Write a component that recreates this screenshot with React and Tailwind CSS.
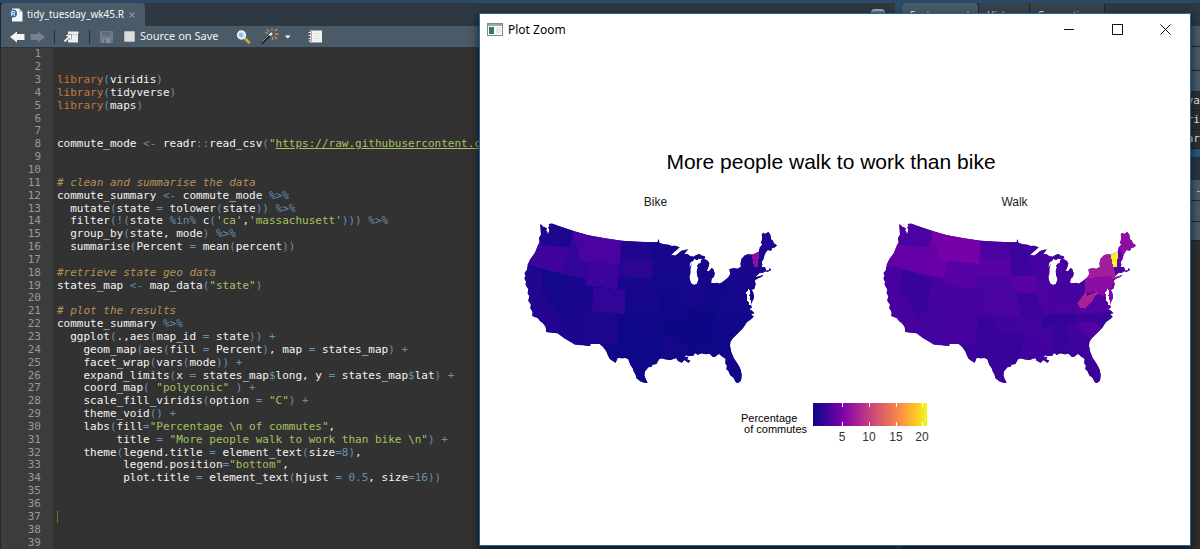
import React from "react";

const CODE = [
  "",
  "",
  "library(viridis)",
  "library(tidyverse)",
  "library(maps)",
  "",
  "",
  'commute_mode <- readr::read_csv("https://raw.githubusercontent.c',
  "",
  "",
  "# clean and summarise the data",
  "commute_summary <- commute_mode %>%",
  "  mutate(state = tolower(state)) %>%",
  "  filter(!(state %in% c('ca','massachusett'))) %>%",
  "  group_by(state, mode) %>%",
  "  summarise(Percent = mean(percent))",
  "",
  "#retrieve state geo data",
  'states_map <- map_data("state")',
  "",
  "# plot the results",
  "commute_summary %>%",
  "  ggplot(.,aes(map_id = state)) +",
  "    geom_map(aes(fill = Percent), map = states_map) +",
  "    facet_wrap(vars(mode)) +",
  "    expand_limits(x = states_map$long, y = states_map$lat) +",
  '    coord_map( "polyconic" ) +',
  '    scale_fill_viridis(option = "C") +',
  "    theme_void() +",
  '    labs(fill="Percentage \\n of commutes",',
  '         title = "More people walk to work than bike \\n") +',
  "    theme(legend.title = element_text(size=8),",
  '          legend.position="bottom",',
  "          plot.title = element_text(hjust = 0.5, size=16))",
  "",
  "",
  "",
  "",
  "",
];
const CURSOR_LINE = 37;

const TOKEN =
  /(#.*$)|(https?:[^"]*)|("(?=https?:)|"[^"]*"|'[^']*')|(\blibrary\b)|(%[a-z>]+%|<-|::|[()=+$!]|\b\d+(?:\.\d+)?\b)/g;
const STYLES = [
  "italic text-[#b8905a]",
  "text-[#a5c261] underline",
  "text-[#a5c261]",
  "text-[#cc7833]",
  "text-[#6690b0]",
];

function highlight(line) {
  const out = [];
  let last = 0;
  for (const m of line.matchAll(TOKEN)) {
    if (m.index > last) out.push(line.slice(last, m.index));
    const kind = m.slice(1).findIndex((g) => g !== undefined);
    out.push(
      <span key={m.index} className={STYLES[kind]}>
        {m[0]}
      </span>
    );
    last = m.index + m[0].length;
  }
  out.push(line.slice(last));
  return out;
}

const OUTLINE =
  "M76,43 L80,45 84,50 90,52 96,56 93,62 98,66 96,72 101,69 103,60 100,52 104,48 101,42 110,40 140,51 178,64 220,76 270,85 320,92 370,95 412,97 428,97 429,88 432,90 433,98 445,103 460,104 470,108 480,107 494,112 484,121 474,129 466,138 474,135 480,137 488,132 494,127 500,122 510,120 520,117 514,124 508,132 518,133 526,139 536,140 544,135 554,132 560,137 568,138 571,144 560,147 552,145 546,150 538,146 534,153 528,155 524,164 522,172 528,166 531,158 526,178 526,190 523,202 526,214 530,222 538,225 546,221 551,208 546,194 545,182 549,172 546,168 552,160 556,162 559,150 566,146 578,152 583,160 580,172 575,182 582,184 590,174 595,178 599,190 597,200 590,206 588,218 598,220 606,218 614,221 626,214 640,202 646,192 643,178 654,175 668,176 678,170 676,160 680,146 690,136 700,133 712,134 722,130 732,124 734,112 742,104 738,98 742,84 740,74 744,68 750,72 760,66 766,74 768,88 774,92 776,100 786,106 780,112 772,114 768,122 758,120 752,128 748,136 746,146 740,156 742,164 739,170 750,172 754,182 762,181 764,174 768,180 758,185 750,184 744,188 734,188 728,194 720,202 736,198 746,194 740,200 724,208 719,212 722,222 718,236 710,240 716,250 717,264 712,274 708,284 710,294 702,296 712,304 718,310 708,312 716,320 708,328 696,336 684,354 676,362 664,374 652,386 646,396 645,408 648,424 656,444 668,462 676,476 680,494 678,512 668,520 662,516 656,504 646,496 640,482 634,478 636,468 631,460 632,446 622,440 612,431 600,440 594,441 584,431 572,433 560,430 548,434 540,429 534,438 524,437 514,436 508,442 520,440 516,448 526,452 520,458 508,450 500,458 488,452 484,444 466,450 450,448 440,445 432,448 424,462 412,464 410,470 400,472 390,484 388,496 392,508 398,518 388,518 376,514 364,504 362,494 356,484 354,476 346,464 340,448 332,444 320,445 308,443 302,458 292,452 284,446 278,434 274,424 264,410 254,401 226,402 226,408 202,406 180,404 150,386 128,370 94,366 92,350 84,340 76,334 68,324 52,318 53,306 46,294 48,284 40,272 43,258 38,250 40,238 32,224 33,214 28,206 32,196 28,190 36,180 38,164 46,148 60,128 68,108 74,96 72,84 78,74 Z";
const BAY = "M700,238 L696,246 692,244 697,258 695,270 702,278 704,288 709,280 706,268 703,256 706,244 Z";

// id, polygon, bike colour, walk colour
const STATES = [
  ["ca", "20,165 85,184 78,240 138,325 126,374 90,380 20,310", "#230591", "#46019e"],
  ["nv", "85,182 176,206 158,308 148,306 138,325 78,240", "#14078a", "#38039a"],
  ["ut", "176,206 213,212 212,226 236,232 230,304 160,292", "#18078c", "#46039e"],
  ["az", "160,292 230,304 222,412 120,376 138,325 148,306 158,308", "#1b068d", "#43039e"],
  ["nm", "230,304 310,312 306,402 222,412", "#1e068e", "#48039f"],
  ["co", "236,232 332,240 328,312 230,304", "#300597", "#46039f"],
  ["wa", "60,30 178,60 165,112 100,108 70,96", "#1f068f", "#4a02a0"],
  ["or", "74,96 84,104 100,108 155,112 157,128 146,150 140,190 20,160", "#3f049b", "#6400a6"],
  ["id", "178,60 172,84 182,98 194,122 194,138 205,154 222,154 213,208 140,190 146,150 157,128 155,112 165,112", "#33059a", "#6900a7"],
  ["mt", "174,60 320,88 314,164 222,152 218,156 205,154 192,136 194,122 182,98 174,84", "#4a02a0", "#7501a8"],
  ["wy", "222,152 314,162 306,237 212,226", "#3b049b", "#5601a4"],
  ["nd", "320,88 408,92 414,151 316,147", "#20068f", "#4b02a0"],
  ["sd", "316,147 414,151 414,206 400,208 390,204 312,200", "#2c0595", "#5801a4"],
  ["ne", "310,202 400,208 414,210 430,256 332,254 332,240 308,237", "#18078c", "#4803a0"],
  ["ks", "331,253 430,256 438,270 438,320 328,314", "#14078a", "#4a02a0"],
  ["ok", "310,312 438,318 442,370 400,368 362,356 360,324 310,320", "#120789", "#40039d"],
  ["tx", "310,320 360,324 362,356 400,368 446,372 452,402 440,460 410,530 340,530 250,420 250,402 306,402", "#0e0788", "#390399"],
  ["mn", "408,92 500,108 466,140 460,160 490,198 414,200 410,150", "#17078b", "#3e039c"],
  ["ia", "408,198 488,196 495,222 482,250 420,246", "#15078a", "#5a01a4"],
  ["mo", "428,250 482,248 500,288 516,312 508,328 440,324", "#0f0788", "#3e039c"],
  ["ar", "440,324 508,326 496,374 448,374", "#0d0786", "#43039e"],
  ["la", "448,374 492,374 490,402 520,404 530,464 440,464", "#15078a", "#4102a0"],
  ["wi", "460,136 480,134 524,152 530,204 490,206 480,186 460,162", "#17078b", "#4602a0"],
  ["up", "474,132 500,116 572,130 572,150 530,158 500,144", "#15078a", "#4802a0"],
  ["mi", "544,142 604,142 604,222 546,228", "#17078b", "#46039f"],
  ["il", "488,204 532,204 532,260 520,306 512,306 496,280 482,250", "#14078a", "#4a02a0"],
  ["in", "532,222 568,222 572,270 548,292 524,300 532,260", "#17078b", "#4702a0"],
  ["oh", "568,222 600,222 634,206 634,248 610,278 572,270", "#12078a", "#4402a0"],
  ["ky", "516,312 524,298 548,292 572,270 606,278 618,294 602,314", "#100788", "#4a02a0"],
  ["tn", "508,326 516,314 620,308 612,320 580,344 498,352", "#0d0786", "#330597"],
  ["ms", "498,352 538,348 536,440 516,440 520,404 490,402", "#0d0786", "#43039e"],
  ["al", "538,348 576,345 590,402 548,408 548,436 536,440", "#0d0786", "#36049a"],
  ["ga", "576,345 612,340 654,386 646,412 590,410", "#0e0787", "#40039c"],
  ["fl", "548,408 590,408 648,410 700,530 620,530 600,446 546,440", "#130789", "#3c039a"],
  ["sc", "608,342 642,332 664,338 684,354 652,388", "#12078a", "#5601a4"],
  ["nc", "620,308 730,298 720,330 684,354 664,338 642,332 608,342 580,344", "#10078a", "#38049a"],
  ["va", "602,316 618,294 634,296 652,280 664,258 684,250 720,296 720,304", "#14078a", "#5002a2"],
  ["wv", "634,246 640,258 656,250 670,244 672,252 662,260 652,278 634,296 618,294 610,280", "#15078a", "#a82296"],
  ["pa", "632,206 712,196 722,216 710,240 634,250", "#18078c", "#8a0da4"],
  ["md", "656,246 706,238 720,262 712,278 696,262 672,252 670,244", "#17078b", "#8707a0"],
  ["nj", "712,196 730,206 722,240 712,248 708,238 720,216", "#15078a", "#6e00a8"],
  ["ny", "632,206 636,176 676,166 680,130 712,130 720,172 726,196 750,192 740,204 714,208 712,196", "#1c068e", "#a21d99"],
  ["ma", "718,170 740,166 772,170 770,188 728,196 724,190", "#1f068f", "#4b02a0"],
  ["nh", "732,122 738,108 750,140 742,168 728,170", "#1f068f", "#6a00a7"],
  ["me", "742,60 790,60 790,112 750,144 738,116", "#1e068e", "#8f0da3"],
  ["vt", "709,132 733,126 728,170 718,172", "#8f0da3", "#f0f724"],
];

function StateMap({ mode }) {
  const column = mode === "Bike" ? 2 : 3;
  const base = mode === "Bike" ? "#13078a" : "#43039e";
  const clip = "land-" + mode;
  return (
    <figure className="flex flex-col items-center">
      <figcaption className="text-[12px] leading-4 text-[#1a1a1a]">{mode}</figcaption>
      <svg viewBox="18 0 810 540" className="w-[270px] h-[180px]" shapeRendering="crispEdges" role="img" aria-label={mode}>
        <clipPath id={clip}>
          <path d={OUTLINE} />
        </clipPath>
        <g clipPath={`url(#${clip})`}>
          <rect width="830" height="540" fill={base} />
          {STATES.map((s) => (
            <polygon key={s[0]} points={s[1]} fill={s[column]} />
          ))}
        </g>
        <path d={BAY} fill="#fff" />
      </svg>
    </figure>
  );
}

function Legend() {
  return (
    <div className="flex items-start gap-[6px] self-center pl-1">
      <div className="pt-[10px] text-[11px] leading-[11px] text-black whitespace-pre">
        {"Percentage\n of commutes"}
      </div>
      <svg viewBox="0 0 120 44" className="w-[120px] h-11" fontFamily="Liberation Sans, Arial, sans-serif" fontSize="12" fill="#333" textAnchor="middle">
        <defs>
          <linearGradient id="plasma">
            <stop offset="0" stopColor="#0d0887" />
            <stop offset="0.13" stopColor="#42039d" />
            <stop offset="0.26" stopColor="#7e03a8" />
            <stop offset="0.4" stopColor="#ab2494" />
            <stop offset="0.52" stopColor="#cc4778" />
            <stop offset="0.65" stopColor="#e66c5c" />
            <stop offset="0.78" stopColor="#f89540" />
            <stop offset="0.9" stopColor="#fdc527" />
            <stop offset="1" stopColor="#f0f921" />
          </linearGradient>
        </defs>
        <rect width="114" height="23" fill="url(#plasma)" />
        <path d="M29.500,0v4M56.500,0v4M83.500,0v4M109.500,0v4M29.500,19v4M56.500,19v4M83.500,19v4M109.500,19v4" stroke="#fff" />
        <text x="29" y="38">5</text>
        <text x="56" y="38">10</text>
        <text x="83" y="38">15</text>
        <text x="109" y="38">20</text>
      </svg>
    </div>
  );
}

function PlotWindow() {
  return (
    <section className="absolute left-[479px] right-[9px] top-[13px] bottom-[3px] flex flex-col overflow-hidden border border-[#2468a0] bg-white shadow-[0_4px_8px_1px_rgba(8,16,24,0.7)] font-['Liberation_Sans',Arial,sans-serif]">
      <header className="flex h-[31px] shrink-0 items-center pl-[7px] text-black">
        <svg viewBox="0 0 16 14" className="h-[14px] w-4">
          <rect x="0.500" y="0.500" width="15" height="12" fill="#fff" stroke="#888" />
          <rect x="1" y="1" width="14" height="2" fill="#9aa" />
          <rect x="2" y="4" width="5" height="7" fill="#2e7d6b" />
          <rect x="9" y="4" width="5" height="7" fill="#e4e8ec" />
        </svg>
        <h1 className="ml-[5px] flex-1 font-['Noto_Sans','Open_Sans',sans-serif] text-[12px]">Plot Zoom</h1>
        <div className="flex pr-px">
          <button aria-label="Minimize" className="flex w-12 justify-center">
            <svg viewBox="0 0 11 11" className="size-[11px]" stroke="#111" fill="none" shapeRendering="crispEdges"><path d="M0,5.500h10" /></svg>
          </button>
          <button aria-label="Maximize" className="flex w-12 justify-center">
            <svg viewBox="0 0 11 11" className="size-[11px]" stroke="#111" fill="none" shapeRendering="crispEdges"><path d="M0.500,0.500h10v10h-10z" /></svg>
          </button>
          <button aria-label="Close" className="flex w-12 justify-center">
            <svg viewBox="0 0 11 11" className="size-[11px]" stroke="#111" fill="none"><path d="M0.500,0.500l10,10M10.500,0.500l-10,10" /></svg>
          </button>
        </div>
      </header>
      <div className="flex flex-1 flex-col pt-[105px]">
        <h2 className="pr-2 text-center text-[21px] leading-6 text-black">More people walk to work than bike</h2>
        <div className="mt-5 grid grid-cols-2 gap-2">
          <StateMap mode="Bike" />
          <StateMap mode="Walk" />
        </div>
        <div className="mt-[13px] flex justify-center">
          <Legend />
        </div>
      </div>
    </section>
  );
}

function Divider() {
  return <span className="h-[14px] w-px bg-[#22303c]" />;
}

function Toolbar() {
  return (
    <div className="flex h-[22px] shrink-0 items-center border-b border-[#2a3742] bg-[#4a5a67] pl-[9px] text-[#f0f0f0]">
      <button aria-label="Back">
        <svg viewBox="0 0 15 12" className="h-3 w-[15px]"><path d="M0,6L7,0.500V3H14.500V9H7V11.500Z" fill="#f4f4f2" /></svg>
      </button>
      <button aria-label="Forward" className="ml-[5px] mr-[9px]">
        <svg viewBox="0 0 15 12" className="h-3 w-[15px]"><path d="M15,6L8,0.500V3H0.500V9H8V11.500Z" fill="#74818b" /></svg>
      </button>
      <Divider />
      <button aria-label="Show in new window" className="ml-[9px] mr-[10px]">
        <svg viewBox="0 0 15 12" className="h-3 w-[15px]">
          <path d="M4,0.500H14.500V3H14V11.500H4Z" fill="#eceeef" />
          <path d="M4,3H14V4H4Z" fill="#c9d0d5" />
          <path d="M0.500,10.500L6,5M2.500,4.500H6.500V8.500" stroke="#5d6b77" strokeWidth="2.600" fill="none" />
          <path d="M0.500,10.500L6,5M2.500,4.500H6.500V8.500" stroke="#fff" strokeWidth="1.600" fill="none" />
        </svg>
      </button>
      <Divider />
      <button aria-label="Save" className="ml-[10px] mr-[11px]">
        <svg viewBox="0 0 13 12" className="h-3 w-[13px]">
          <path d="M0,0H13V12H0Z" fill="#6d7b87" />
          <path d="M2.500,1H10.500V5H2.500Z" fill="#5c6b77" />
          <path d="M3,7.500H10V12H3Z" fill="#84919c" />
          <path d="M4,8.500H6V12H4Z" fill="#5c6b77" />
        </svg>
      </button>
      <label className="flex items-center gap-[5px] font-['Noto_Sans','Open_Sans',sans-serif] text-[11px]">
        <input type="checkbox" className="size-[11px] appearance-none rounded-[1px] border border-[#b8b8b8] bg-[#dcdcdc]" />
        Source on Save
      </label>
      <span className="ml-2"><Divider /></span>
      <button aria-label="Find and replace" className="ml-[10px]">
        <svg viewBox="0 0 15 14" className="h-[14px] w-[15px]">
          <path d="M8,7.500L13,12.500" stroke="#d9a441" strokeWidth="2.500" strokeLinecap="round" />
          <circle cx="5.500" cy="5" r="4" fill="#cfe4f7" stroke="#f2f6fa" strokeWidth="1.300" />
          <circle cx="5" cy="5" r="2.200" fill="#8fbcec" />
        </svg>
      </button>
      <button aria-label="Code tools" className="ml-[9px] flex items-center gap-[5px]">
        <svg viewBox="0 0 20 17" className="h-[17px] w-5">
          <path d="M1.500,15.500L10,7" stroke="#1d2329" strokeWidth="2.600" />
          <path d="M1.500,14.500L9,7" stroke="#6aa2a8" />
          <path d="M9.500,7.500L12,5" stroke="#eee" strokeWidth="2.400" />
          <path d="M12,0.500V2.500M7,1.500L9,3.500M17,1L15,3M5.500,5H8M15,6H18.500M14.500,8.500L17,11M12.500,9V12" stroke="#d98b4a" strokeWidth="1.400" />
        </svg>
        <svg viewBox="0 0 6 4" className="h-1 w-[6px]"><path d="M0,0.500H5.500L2.800,3.500Z" fill="#fff" /></svg>
      </button>
      <span className="ml-[6px]"><Divider /></span>
      <button aria-label="Compile report" className="ml-[11px]">
        <svg viewBox="0 0 14 13" className="h-[13px] w-[14px]">
          <rect x="2" y="0.500" width="12" height="12" fill="#f4f2ee" />
          <rect x="2" y="0.500" width="2" height="12" fill="#b9a9a9" />
          <path d="M0.500,2.500H3M0.500,5.500H3M0.500,8.500H3M0.500,11H3" stroke="#e8e8e8" />
          <path d="M6,3.500H12M6,6H12M6,8.500H12" stroke="#e6e4e0" />
        </svg>
      </button>
    </div>
  );
}

function EditorPane() {
  return (
    <section className="flex min-w-0 flex-col overflow-hidden border-l border-[#182a3c]">
      <div className="flex h-[23px] shrink-0 items-stretch bg-[#2d3840]">
        <div className="flex items-center rounded-t-sm bg-[#4a5a67] pl-2 pr-[10px] font-['Noto_Sans','Open_Sans',sans-serif] text-[10px] text-[#f6f7f8]">
          <svg viewBox="0 0 14 14" className="mr-1 h-[14px] w-[14px]">
            <path d="M3,0.500H10L13.500,4V13.500H3Z" fill="#f6f7f8" />
            <path d="M10,0.500V4H13.500Z" fill="#c3cbd2" />
            <circle cx="4" cy="5.500" r="4" fill="#2f68ad" />
            <path d="M2.800,8V3.300H4.500Q5.800,3.300 5.800,4.500T4.500,5.700H2.800M4.500,5.700L5.900,8" stroke="#fff" fill="none" />
          </svg>
          <span>tidy_tuesday_wk45.R</span>
          <button aria-label="Close tab" className="ml-[5px]">
            <svg viewBox="0 0 6 6" className="size-[6px]"><path d="M0.500,0.500L5.500,5.500M5.500,0.500L0.500,5.500" stroke="#83909b" strokeWidth="1.300" /></svg>
          </button>
        </div>
        <div className="flex flex-1 items-center justify-end pr-[10px]">
          <span className="h-3 w-[14px] rounded-sm border-t-2 border-[#9ba8b3] bg-[#5d6d7b]" />
        </div>
      </div>
      <Toolbar />
      <div className="grid flex-1 auto-rows-fr bg-[#323232] bg-linear-to-r from-[#3c3c3c] from-[52px] to-[#323232] to-[52px] font-['DejaVu_Sans_Mono',monospace] text-[11px] leading-3">
        {CODE.map((line, i) => (
          <div key={i} className="flex items-center">
            <span className="w-[52px] shrink-0 pr-3 text-right text-[#999]">{i + 1}</span>
            <code className="whitespace-pre pl-1 font-['DejaVu_Sans_Mono',monospace] text-[#f4f4f4]">{highlight(line)}</code>
            {i + 1 === CURSOR_LINE && <span className="h-3 w-px bg-[#5f7a32]" />}
          </div>
        ))}
      </div>
    </section>
  );
}

function Fragment({ children }) {
  return (
    <div className="flex h-[19px] items-center justify-end overflow-hidden border-b border-[#1f1f1f] bg-[#2e2e2e] font-['DejaVu_Sans_Mono',monospace] text-[11px] text-[#e6e6e6]">
      {children}
    </div>
  );
}

function SidePane() {
  return (
    <aside className="flex min-w-0 flex-col overflow-hidden">
      <div className="flex h-[23px] shrink-0 bg-[#2d3840] font-['Noto_Sans','Open_Sans',sans-serif] text-[10px] leading-[24px] text-[#e4e8ec]">
        <button className="rounded-t-sm bg-[#4a5a67] px-2">Environment</button>
        <button className="border-x border-[#1d2730] bg-[#36434d] px-2">History</button>
        <button className="border-r border-[#1d2730] bg-[#36434d] px-2">Connections</button>
      </div>
      <div className="h-[21px] border-b border-[#1c2731] bg-[#4a5a67]" />
      <div className="h-6 border-b border-[#1c2731] bg-[#4a5a67]" />
      <div className="h-[21px] border-b border-[#1c2731] bg-[#4a5a67]" />
      <Fragment>va</Fragment>
      <Fragment>ri</Fragment>
      <Fragment>ar</Fragment>
      <div className="h-2 bg-[#2a5784]" />
      <div className="h-[23px] bg-[#2a343e]" />
      <div className="h-[21px] border-b border-[#1c2731] bg-[#4a5a67] text-right text-[11px] leading-[20px] text-[#c8ced4]">-</div>
      <div className="h-[21px] border-b border-[#1c2731] bg-[#4a5a67]" />
      <div className="h-[19px] border-b border-[#1c2731] bg-[#4a5a67]" />
      <div className="flex-1 bg-[#322e2b]" />
    </aside>
  );
}

export default function App() {
  return (
    <main className="relative grid min-h-screen grid-cols-[3fr_1fr] gap-[7px] overflow-hidden bg-[#2c4a68] pt-[3px]">
      <EditorPane />
      <SidePane />
      <PlotWindow />
    </main>
  );
}
